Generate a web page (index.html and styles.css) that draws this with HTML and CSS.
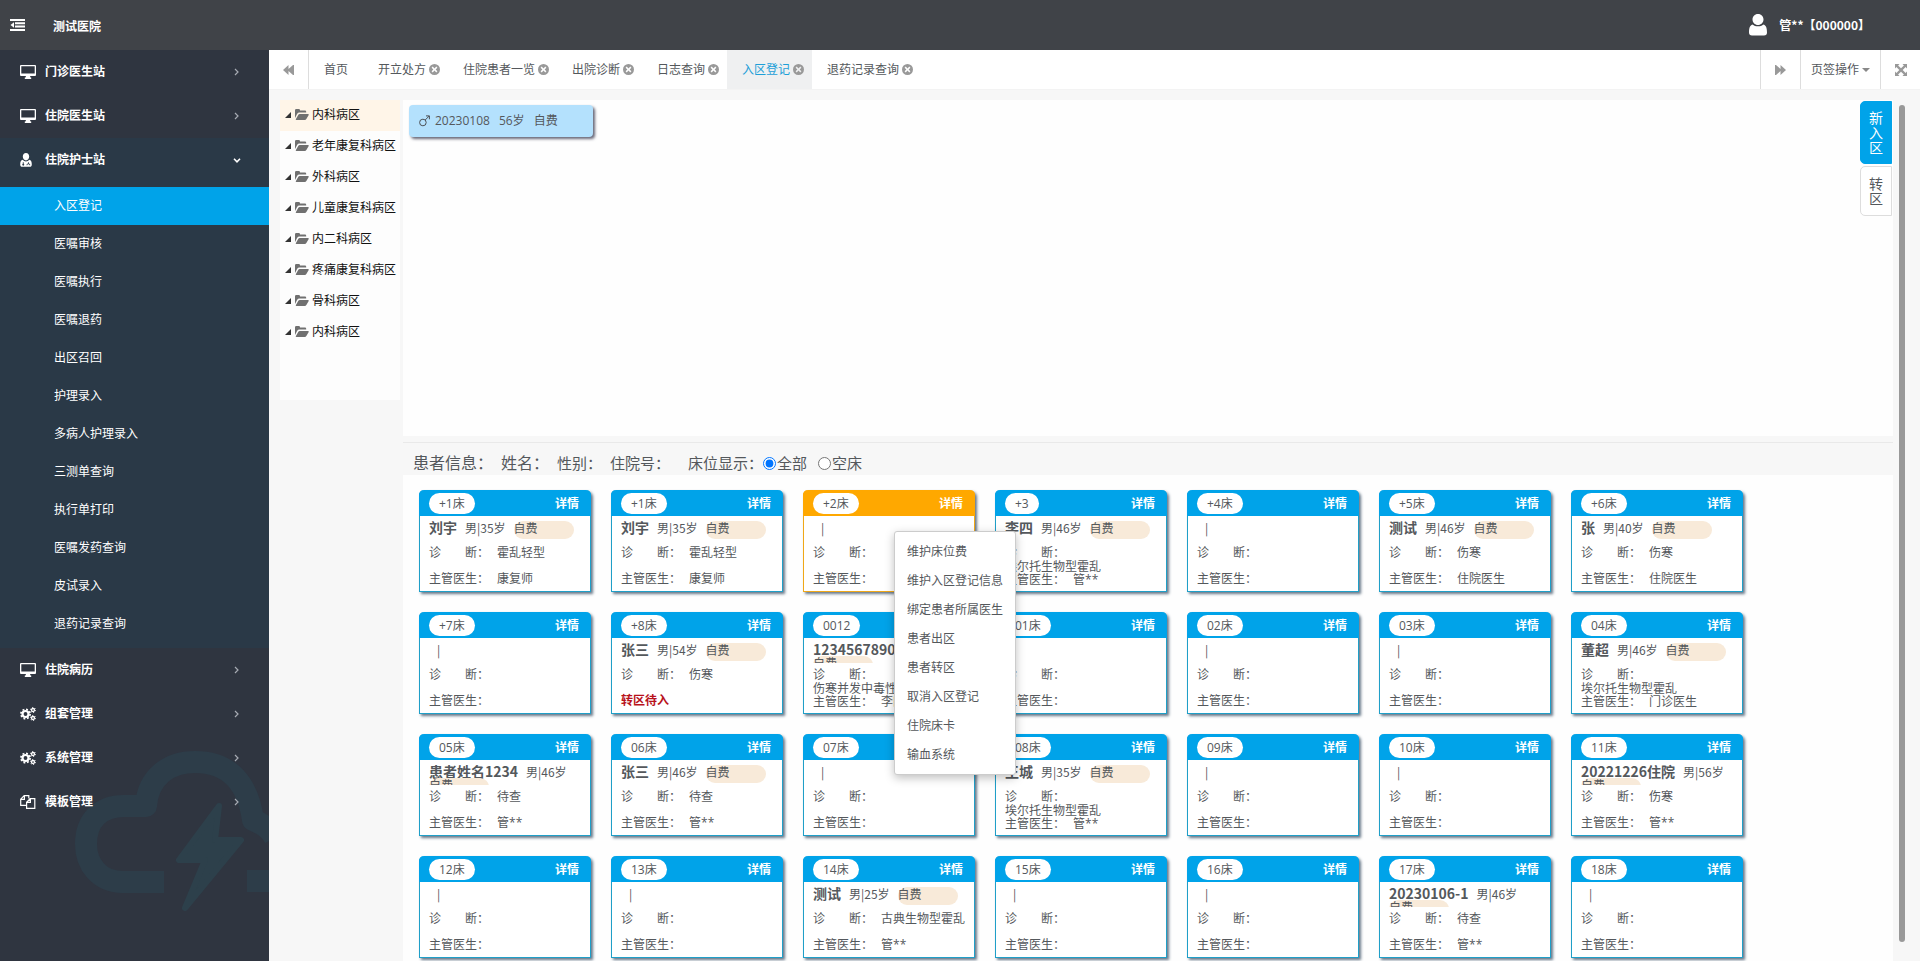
FILE: index.html
```html
<!DOCTYPE html>
<html lang="zh-CN">
<head>
<meta charset="utf-8">
<title>测试医院</title>
<link rel="stylesheet" href="styles.css">
</head>
<body>
<svg class="defs" aria-hidden="true">
  <symbol id="i-desktop" viewBox="0 0 16 14"><path fill-rule="evenodd" d="M1 0h14a1 1 0 0 1 1 1v9a1 1 0 0 1-1 1h-5l.5 1.5h.7V14H4.800v-1.500h.7L6 11H1a1 1 0 0 1-1-1V1a1 1 0 0 1 1-1zm.3 1.200v7.300h13.400V1.200z"/></symbol>
  <symbol id="i-gears" viewBox="0 0 16 14"><g fill="none" stroke="currentColor"><circle cx="5.500" cy="7" r="3" stroke-width="2.200"/><circle cx="5.500" cy="7" r="4.600" stroke-width="1.700" stroke-dasharray="1.900 1.710"/><circle cx="13" cy="3" r="1.500" stroke-width="1.300"/><circle cx="13" cy="3" r="2.500" stroke-width="1" stroke-dasharray="1.200 1.420"/><circle cx="13" cy="11" r="1.500" stroke-width="1.300"/><circle cx="13" cy="11" r="2.500" stroke-width="1" stroke-dasharray="1.200 1.420"/></g></symbol>
  <symbol id="i-copy" viewBox="0 0 16 14"><path fill="none" stroke="currentColor" stroke-width="1.200" d="M6.500 10.400H.7V4.200L4.200.6h4.600v3M4.400.8v3.600H.8M10.200 3.700h4.600v9.700H6.600V7.200zM10.400 3.900v3.500H6.800"/></symbol>
  <symbol id="i-nurse" viewBox="0 0 12 14"><path fill-rule="evenodd" d="M6 0c2 0 3.200 1.500 3.200 3.600S7.800 7.400 6 7.400 2.800 5.700 2.800 3.600 4 0 6 0zM2.800 6.800C3.700 8 4.700 8.500 6 8.500S8.300 8 9.200 6.800c2 .4 2.600 2.300 2.600 4.700 0 1.500-.7 2.300-2 2.300H2.200c-1.300 0-2-.8-2-2.300 0-2.400.6-4.300 2.600-4.700zm0 2.400v1.500a1 1 0 1 0 .9 0V9.200zM8 9.200v1.200c-1 .2-1.500.8-1.500 1.900h.8c0-.8.300-1.100 1.100-1.100s1.100.3 1.100 1.100h.8c0-1.100-.5-1.700-1.500-1.900V9.200z"/></symbol>
  <symbol id="i-outdent" viewBox="0 0 15 12"><path d="M0 0h15v2H0zM5 3.300h10v2H5zM5 6.600h10v2H5zM0 10h15v2H0zM4 3.200v5.600L.5 6z"/></symbol>
  <symbol id="i-folder" viewBox="0 0 14 11"><path d="M0 9V1.200Q0 0 1.200 0h2.600Q5 0 5 1.200v.3h5q1.200 0 1.200 1.200v.9H4.400Q3 3.600 2.200 4.700zM.8 10.200 3.200 6Q3.700 5 4.800 5H13q1.200 0 .7 1l-2.200 3.800Q10.800 11 9.700 11H1.400q-1 0-.6-.8z"/></symbol>
  <symbol id="i-close" viewBox="0 0 11 11"><path fill-rule="evenodd" d="M5.500 0a5.500 5.500 0 1 1 0 11 5.500 5.500 0 0 1 0-11zM3.700 2.600 2.600 3.700l1.800 1.800-1.800 1.800 1.100 1.100 1.800-1.800 1.800 1.800 1.100-1.100-1.800-1.800 1.800-1.800-1.100-1.100-1.800 1.800z"/></symbol>
  <symbol id="i-back" viewBox="0 0 11 10"><path d="M5.500 0v4L10 0h1v10h-1L5.500 6v4L0 5z"/></symbol>
  <symbol id="i-expand" viewBox="0 0 12 12"><path d="M0 0h4.500L3.100 1.400 6 4.300l2.900-2.900L7.500 0H12v4.500l-1.400-1.400L7.700 6l2.900 2.900L12 7.500V12H7.500l1.400-1.400L6 7.700l-2.900 2.900L4.500 12H0V7.500l1.400 1.400L4.300 6 1.400 3.100 0 4.500z"/></symbol>
  <symbol id="i-user" viewBox="0 0 18 22"><path d="M9 0c3.400 0 5.500 2.500 5.500 5.500S12 11 9 11 3.500 8.500 3.500 5.500 5.600 0 9 0zM3.500 10.500C5 11.800 6.800 12.300 9 12.300s4-.5 5.500-1.800C17.500 11.500 18 15 18 18.500c0 1.800-1 3-3 3H3c-2 0-3-1.200-3-3 0-3.500.5-7 3.500-8z"/></symbol>
  <symbol id="i-chev" viewBox="0 0 5 8"><path fill="none" stroke="currentColor" stroke-width="1.200" d="m1 1 3 3-3 3"/></symbol>
  <symbol id="i-chevdown" viewBox="0 0 8 5"><path fill="none" stroke="currentColor" stroke-width="1.600" d="m1 .8 3 3 3-3"/></symbol>
</svg>

<header class="topbar">
  <button class="plain" aria-label="收起菜单"><svg class="ico-outdent"><use href="#i-outdent"/></svg></button>
  <strong class="brand">测试医院</strong>
  <a class="user" href="#"><svg class="ico-user"><use href="#i-user"/></svg><span>管**【000000】</span></a>
</header>

<div class="shell">
  <nav class="side">
    <svg class="watermark" viewBox="0 0 200 170" aria-hidden="true"><path d="M95 136H54c-24 0-37-18-37-38 0-24 15-38 38-38h22c2-30 24-44 49-44 35 0 53 22 58 58 10 4 18 10 22 18M178 135h30"/><path class="bolt" d="m150 60-40 54h26l-20 48 56-68h-26z"/></svg>
    <a class="group" href="#"><svg><use href="#i-desktop"/></svg><span>门诊医生站</span><svg class="chev"><use href="#i-chev"/></svg></a>
    <a class="group" href="#"><svg><use href="#i-desktop"/></svg><span>住院医生站</span><svg class="chev"><use href="#i-chev"/></svg></a>
    <div class="open">
      <a class="group" href="#"><svg class="nurse"><use href="#i-nurse"/></svg><span>住院护士站</span><svg class="chev down"><use href="#i-chevdown"/></svg></a>
      <div class="sub">
        <a class="on" href="#">入区登记</a><a href="#">医嘱审核</a><a href="#">医嘱执行</a><a href="#">医嘱退药</a><a href="#">出区召回</a><a href="#">护理录入</a><a href="#">多病人护理录入</a><a href="#">三测单查询</a><a href="#">执行单打印</a><a href="#">医嘱发药查询</a><a href="#">皮试录入</a><a href="#">退药记录查询</a>
      </div>
    </div>
    <a class="group" href="#"><svg><use href="#i-desktop"/></svg><span>住院病历</span><svg class="chev"><use href="#i-chev"/></svg></a>
    <a class="group" href="#"><svg><use href="#i-gears"/></svg><span>组套管理</span><svg class="chev"><use href="#i-chev"/></svg></a>
    <a class="group" href="#"><svg><use href="#i-gears"/></svg><span>系统管理</span><svg class="chev"><use href="#i-chev"/></svg></a>
    <a class="group" href="#"><svg><use href="#i-copy"/></svg><span>模板管理</span><svg class="chev"><use href="#i-chev"/></svg></a>
  </nav>

  <main class="work">
    <div class="tabs">
      <button class="tool first" aria-label="向左"><svg class="ico-seek"><use href="#i-back"/></svg></button>
      <a class="tab home" href="#">首页</a>
      <a class="tab" href="#">开立处方<svg><use href="#i-close"/></svg></a>
      <a class="tab" href="#">住院患者一览<svg><use href="#i-close"/></svg></a>
      <a class="tab" href="#">出院诊断<svg><use href="#i-close"/></svg></a>
      <a class="tab" href="#">日志查询<svg><use href="#i-close"/></svg></a>
      <a class="tab current" href="#">入区登记<svg><use href="#i-close"/></svg></a>
      <a class="tab" href="#">退药记录查询<svg><use href="#i-close"/></svg></a>
      <div class="tools">
        <button class="tool" aria-label="向右"><svg class="ico-seek flip"><use href="#i-back"/></svg></button>
        <button class="tool wide">页签操作<i class="caret"></i></button>
        <button class="tool" aria-label="全屏"><svg class="ico-expand"><use href="#i-expand"/></svg></button>
      </div>
    </div>

    <div class="content">
      <div class="tree">
        <a class="sel" href="#"><i></i><svg><use href="#i-folder"/></svg>内科病区</a>
        <a href="#"><i></i><svg><use href="#i-folder"/></svg>老年康复科病区</a>
        <a href="#"><i></i><svg><use href="#i-folder"/></svg>外科病区</a>
        <a href="#"><i></i><svg><use href="#i-folder"/></svg>儿童康复科病区</a>
        <a href="#"><i></i><svg><use href="#i-folder"/></svg>内二科病区</a>
        <a href="#"><i></i><svg><use href="#i-folder"/></svg>疼痛康复科病区</a>
        <a href="#"><i></i><svg><use href="#i-folder"/></svg>骨科病区</a>
        <a href="#"><i></i><svg><use href="#i-folder"/></svg>内科病区</a>
      </div>

      <div class="ward">
        <section class="waiting">
          <a class="patient" href="#"><svg class="male" viewBox="0 0 11 12"><path d="M7.200 7.500a3.300 3.300 0 1 1-6.600 0 3.300 3.300 0 0 1 6.600 0zM6.200 5 10.300.9M7 .9h3.400v3.400"/></svg><span>20230108</span><span>56岁</span><span>自费</span></a>
          <div class="switch">
            <button class="on">新入区</button>
            <button>转区</button>
          </div>
        </section>
        <div class="info">
          <span class="big">患者信息：</span><span class="big">姓名：</span><span>性别：</span><span>住院号：</span>
          <span class="beds-label">床位显示：</span>
          <label><input type="radio" name="bed" checked>全部</label>
          <label><input type="radio" name="bed">空床</label>
        </div>
        <section class="beds">
          <article class="bed"><header><b>+1床</b><a href="#">详情</a></header><p class="who"><strong>刘宇</strong><span>男|35岁</span><em>自费</em></p><p class="diag"><span>诊　　断：</span><span>霍乱轻型</span></p><p class="doc"><span>主管医生：</span><span>康复师</span></p></article>
          <article class="bed"><header><b>+1床</b><a href="#">详情</a></header><p class="who"><strong>刘宇</strong><span>男|35岁</span><em>自费</em></p><p class="diag"><span>诊　　断：</span><span>霍乱轻型</span></p><p class="doc"><span>主管医生：</span><span>康复师</span></p></article>
          <article class="bed picked"><header><b>+2床</b><a href="#">详情</a></header><p class="who"><strong></strong><span>|</span></p><p class="diag"><span>诊　　断：</span></p><p class="doc"><span>主管医生：</span></p>
            <div class="menu" role="menu"><button role="menuitem">维护床位费</button><button role="menuitem">维护入区登记信息</button><button role="menuitem">绑定患者所属医生</button><button role="menuitem">患者出区</button><button role="menuitem">患者转区</button><button role="menuitem">取消入区登记</button><button role="menuitem">住院床卡</button><button role="menuitem">输血系统</button></div>
          </article>
          <article class="bed"><header><b>+3</b><a href="#">详情</a></header><p class="who"><strong>李四</strong><span>男|46岁</span><em>自费</em></p><p class="diag"><span>诊　　断：</span><span>埃尔托生物型霍乱</span></p><p class="doc"><span>主管医生：</span><span>管**</span></p></article>
          <article class="bed"><header><b>+4床</b><a href="#">详情</a></header><p class="who"><strong></strong><span>|</span></p><p class="diag"><span>诊　　断：</span></p><p class="doc"><span>主管医生：</span></p></article>
          <article class="bed"><header><b>+5床</b><a href="#">详情</a></header><p class="who"><strong>测试</strong><span>男|46岁</span><em>自费</em></p><p class="diag"><span>诊　　断：</span><span>伤寒</span></p><p class="doc"><span>主管医生：</span><span>住院医生</span></p></article>
          <article class="bed"><header><b>+6床</b><a href="#">详情</a></header><p class="who"><strong>张</strong><span>男|40岁</span><em>自费</em></p><p class="diag"><span>诊　　断：</span><span>伤寒</span></p><p class="doc"><span>主管医生：</span><span>住院医生</span></p></article>

          <article class="bed"><header><b>+7床</b><a href="#">详情</a></header><p class="who"><strong></strong><span>|</span></p><p class="diag"><span>诊　　断：</span></p><p class="doc"><span>主管医生：</span></p></article>
          <article class="bed"><header><b>+8床</b><a href="#">详情</a></header><p class="who"><strong>张三</strong><span>男|54岁</span><em>自费</em></p><p class="diag"><span>诊　　断：</span><span>伤寒</span></p><p class="doc moving">转区待入</p></article>
          <article class="bed"><header><b>0012</b><a href="#">详情</a></header><p class="who"><strong>1234567890</strong><span>男|46岁</span><em>自费</em></p><p class="diag"><span>诊　　断：</span><span>伤寒并发中毒性心肌炎</span></p><p class="doc"><span>主管医生：</span><span>李四</span></p></article>
          <article class="bed"><header><b>01床</b><a href="#">详情</a></header><p class="who"><strong></strong><span>|</span></p><p class="diag"><span>诊　　断：</span></p><p class="doc"><span>主管医生：</span></p></article>
          <article class="bed"><header><b>02床</b><a href="#">详情</a></header><p class="who"><strong></strong><span>|</span></p><p class="diag"><span>诊　　断：</span></p><p class="doc"><span>主管医生：</span></p></article>
          <article class="bed"><header><b>03床</b><a href="#">详情</a></header><p class="who"><strong></strong><span>|</span></p><p class="diag"><span>诊　　断：</span></p><p class="doc"><span>主管医生：</span></p></article>
          <article class="bed"><header><b>04床</b><a href="#">详情</a></header><p class="who"><strong>董超</strong><span>男|46岁</span><em>自费</em></p><p class="diag"><span>诊　　断：</span><span>埃尔托生物型霍乱</span></p><p class="doc"><span>主管医生：</span><span>门诊医生</span></p></article>

          <article class="bed"><header><b>05床</b><a href="#">详情</a></header><p class="who"><strong>患者姓名1234</strong><span>男|46岁</span><em>自费</em></p><p class="diag"><span>诊　　断：</span><span>待查</span></p><p class="doc"><span>主管医生：</span><span>管**</span></p></article>
          <article class="bed"><header><b>06床</b><a href="#">详情</a></header><p class="who"><strong>张三</strong><span>男|46岁</span><em>自费</em></p><p class="diag"><span>诊　　断：</span><span>待查</span></p><p class="doc"><span>主管医生：</span><span>管**</span></p></article>
          <article class="bed"><header><b>07床</b><a href="#">详情</a></header><p class="who"><strong></strong><span>|</span></p><p class="diag"><span>诊　　断：</span></p><p class="doc"><span>主管医生：</span></p></article>
          <article class="bed"><header><b>08床</b><a href="#">详情</a></header><p class="who"><strong>王城</strong><span>男|35岁</span><em>自费</em></p><p class="diag"><span>诊　　断：</span><span>埃尔托生物型霍乱</span></p><p class="doc"><span>主管医生：</span><span>管**</span></p></article>
          <article class="bed"><header><b>09床</b><a href="#">详情</a></header><p class="who"><strong></strong><span>|</span></p><p class="diag"><span>诊　　断：</span></p><p class="doc"><span>主管医生：</span></p></article>
          <article class="bed"><header><b>10床</b><a href="#">详情</a></header><p class="who"><strong></strong><span>|</span></p><p class="diag"><span>诊　　断：</span></p><p class="doc"><span>主管医生：</span></p></article>
          <article class="bed"><header><b>11床</b><a href="#">详情</a></header><p class="who"><strong>20221226住院</strong><span>男|56岁</span><em>自费</em></p><p class="diag"><span>诊　　断：</span><span>伤寒</span></p><p class="doc"><span>主管医生：</span><span>管**</span></p></article>

          <article class="bed"><header><b>12床</b><a href="#">详情</a></header><p class="who"><strong></strong><span>|</span></p><p class="diag"><span>诊　　断：</span></p><p class="doc"><span>主管医生：</span></p></article>
          <article class="bed"><header><b>13床</b><a href="#">详情</a></header><p class="who"><strong></strong><span>|</span></p><p class="diag"><span>诊　　断：</span></p><p class="doc"><span>主管医生：</span></p></article>
          <article class="bed"><header><b>14床</b><a href="#">详情</a></header><p class="who"><strong>测试</strong><span>男|25岁</span><em>自费</em></p><p class="diag"><span>诊　　断：</span><span>古典生物型霍乱</span></p><p class="doc"><span>主管医生：</span><span>管**</span></p></article>
          <article class="bed"><header><b>15床</b><a href="#">详情</a></header><p class="who"><strong></strong><span>|</span></p><p class="diag"><span>诊　　断：</span></p><p class="doc"><span>主管医生：</span></p></article>
          <article class="bed"><header><b>16床</b><a href="#">详情</a></header><p class="who"><strong></strong><span>|</span></p><p class="diag"><span>诊　　断：</span></p><p class="doc"><span>主管医生：</span></p></article>
          <article class="bed"><header><b>17床</b><a href="#">详情</a></header><p class="who"><strong>20230106-1</strong><span>男|46岁</span><em>自费</em></p><p class="diag"><span>诊　　断：</span><span>待查</span></p><p class="doc"><span>主管医生：</span><span>管**</span></p></article>
          <article class="bed"><header><b>18床</b><a href="#">详情</a></header><p class="who"><strong></strong><span>|</span></p><p class="diag"><span>诊　　断：</span></p><p class="doc"><span>主管医生：</span></p></article>
        </section>
      </div>
      <div class="scroll"></div>
    </div>
  </main>
</div>
</body>
</html>
```

FILE: styles.css
```css
* { box-sizing: border-box; }
body {
  margin: 0;
  height: 100vh;
  overflow: hidden;
  display: flex;
  flex-direction: column;
  font: 12px/16px "Open Sans", "Noto Sans CJK SC", sans-serif;
  color: #54585c;
  background: #f7f7f7;
}
a { color: inherit; text-decoration: none; }
button { font: inherit; color: inherit; background: none; border: 0; padding: 0; margin: 0; }
p { margin: 0; }
svg { fill: currentColor; flex: none; }
.defs { position: absolute; width: 0; height: 0; }

.topbar {
  flex: none;
  height: 50px;
  display: flex;
  align-items: center;
  padding: 0 50px 0 10px;
  background: #404348;
  color: #fff;
}
.plain { display: flex; }
.ico-outdent { width: 15px; height: 12px; }
.brand { margin-left: 28px; padding-top: 4px; }
.user { margin-left: auto; display: flex; align-items: center; gap: 12px; font: bold 12px/16px "Noto Sans CJK SC", sans-serif; }
.ico-user { width: 18px; height: 22px; }

.shell { flex: 1; min-height: 0; display: flex; }

.side { position: relative; flex: none; width: 269px; background: #2f3540; color: #fff; overflow: hidden; }
.watermark { position: absolute; right: 0; bottom: 45px; width: 200px; height: 170px; fill: none; stroke: #2d3d49; stroke-width: 22px; stroke-linejoin: round; }
.watermark .bolt { fill: #2d404b; stroke: #2d404b; stroke-width: 6px; }
.group { position: relative; display: flex; align-items: center; height: 44px; padding: 0 28px 0 20px; font-weight: bold; }
.group svg { width: 16px; height: 14px; margin-right: 9px; }
.group .nurse { width: 12px; margin-right: 13px; }
.group .chev { width: 5px; height: 8px; margin: 0 2px 0 auto; color: #a7abb3; }
.group .down { width: 8px; height: 5px; margin-right: 0; color: #fff; }
.open { background: #2a3947; }
.sub { padding: 5px 0; }
.sub a { display: block; padding-left: 54px; line-height: 38px; }
.sub .on { background: #00a3e9; }

.work { flex: 1; min-width: 0; display: flex; flex-direction: column; }
.tabs { flex: none; display: flex; height: 40px; background: #fff; border-bottom: 1px solid #f3f3f3; }
.tab { display: flex; align-items: center; gap: 3px; padding: 0 8px 0 15px; }
.tab svg { width: 11px; height: 11px; color: #999; }
.tab.home { padding-right: 15px; }
.current { background: #eff0f1; color: #1e9fd8; }
.tools { display: flex; margin-left: auto; }
.tool { display: flex; align-items: center; justify-content: center; width: 40px; border-left: 1px solid #ddd; }
.tool.first { border-left: 0; border-right: 1px solid #ddd; }
.tool.wide { width: 80px; gap: 3px; }
.ico-seek { width: 11px; height: 10px; color: #999; }
.flip { transform: scaleX(-1); }
.ico-expand { width: 12px; height: 12px; color: #999; }
.caret { border: 4px solid transparent; border-top-color: #888; border-bottom: 0; }

.content { flex: 1; min-height: 0; display: flex; padding: 10px 15px 0 11px; }
.tree { flex: none; width: 120px; height: 300px; background: #fdfdfd; color: #111; }
.tree a { display: flex; align-items: center; height: 31px; padding: 0 0 2px 5px; white-space: nowrap; }
.tree .sel { background: #fff5e8; }
.tree i { border: 3px solid transparent; border-right-color: #333; border-bottom-color: #333; margin-right: 4px; }
.tree svg { width: 14px; height: 11px; margin-right: 3px; color: #707070; }

.ward { flex: 1; min-width: 0; display: flex; flex-direction: column; margin-left: 3px; }
.waiting { flex: none; height: 336px; display: flex; justify-content: space-between; align-items: flex-start; background: #fefefe; padding: 1px 1px 0 6px; }
.patient { display: flex; align-items: center; width: 184px; height: 32px; margin-top: 4px; padding-left: 10px; background: #b4e1fd; border-radius: 4px; box-shadow: 2px 2px 3px #667; }
.patient span { margin-right: 9px; }
.male { width: 11px; height: 12px; margin-right: 5px; fill: none; stroke: #4c5055; }
.switch { display: flex; flex-direction: column; gap: 2px; }
.switch button { width: 32px; padding: 9px 8px; font-size: 14px; line-height: 15px; background: #fff; border: 1px solid #ddd; border-radius: 5px 0 0 5px; }
.switch .on { padding: 8px; background: #00a3e9; border-color: #00a3e9; color: #fff; }

.info { flex: none; display: flex; align-items: center; height: 33px; margin-top: 6px; padding: 8px 0 0 10px; border-top: 1px solid #e9e9e9; font-size: 15px; line-height: 20px; }
.info span { margin-right: 8px; }
.info .big { font-size: 16px; }
.info .beds-label { margin: 0 0 0 10px; }
.info label { display: flex; align-items: center; margin-right: 11px; }
.info input { width: 13px; height: 13px; margin: 0 1px 0 0; }

.beds {
  flex: 1;
  min-height: 0;
  display: grid;
  grid-template-columns: repeat(auto-fill, 172px);
  grid-auto-rows: 102px;
  gap: 20px;
  padding: 15px 0 0 16px;
  background: #fefefe;
}
.bed { position: relative; border: 1px solid #1f9fc8; border-top: 0; border-radius: 5px 5px 0 0; background: #fff; box-shadow: 2px 2px 3px #678; line-height: 13px; }
.bed header { display: flex; align-items: center; justify-content: space-between; height: 26px; margin: 0 -1px; padding: 0 12px 0 10px; border-radius: 5px 5px 0 0; background: #00a3e9; color: #fff; }
.bed header b { padding: 0 10px; border-radius: 11px; background: #fff; color: #54585c; font-weight: normal; line-height: 21px; }
.bed header a { font-weight: bold; }
.bed p { display: flex; flex-wrap: wrap; align-content: flex-start; column-gap: 8px; padding-left: 9px; }
.bed .who { height: 25px; padding-top: 5px; overflow: hidden; font-family: "Noto Sans CJK SC", sans-serif; }
.who strong { font-size: 14px; }
.who em { width: 60px; height: 18px; margin-bottom: -5px; border-radius: 9px; background: #f8ead9; font-style: normal; }
.bed .diag { min-height: 31px; padding-top: 5px; row-gap: 1px; }
.bed .moving { color: #b8121b; font-weight: bold; }
.picked { z-index: 1; border-color: #f0a818; }
.picked header { background: #ffa800; }

.menu { position: absolute; left: 90px; top: 41px; display: flex; flex-direction: column; width: 122px; padding: 5px 0; background: #fff; border: 1px solid #ccc; border-radius: 3px; box-shadow: 0 3px 10px rgba(0, 0, 0, .25); }
.menu button { height: 29px; padding-left: 12px; text-align: left; white-space: nowrap; }

.scroll { flex: none; width: 6px; margin: 5px 0 19px 6px; border-radius: 3px; background: #999; }
```
